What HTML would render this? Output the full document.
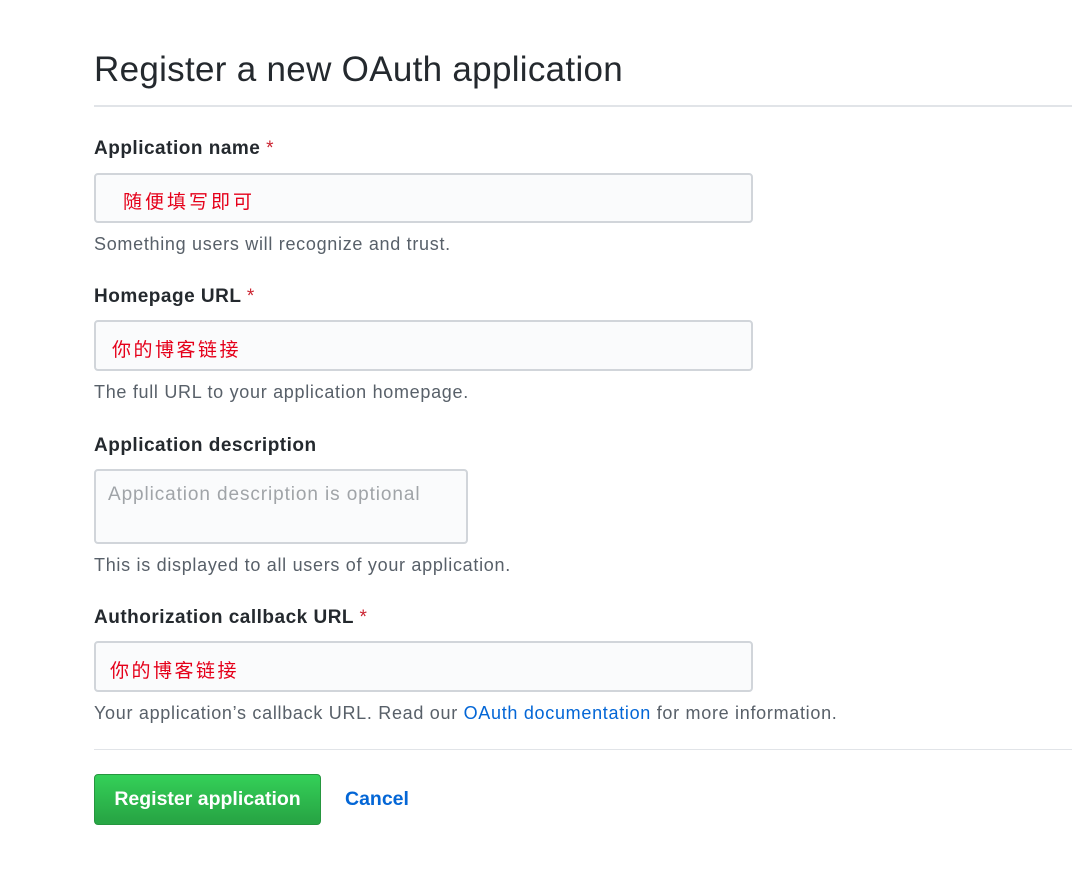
<!DOCTYPE html>
<html><head><meta charset="utf-8"><style>
body{margin:0;background:#fff;font-family:"Liberation Sans","Noto Sans CJK SC",sans-serif;color:#24292e;}
.abs{position:absolute;}
h1{position:absolute;left:94px;top:48px;margin:0;font-weight:400;font-size:35px;line-height:44px;letter-spacing:0.3px;color:#24292e;}
.hr{position:absolute;left:94px;right:0;height:2px;background:#e1e4e8;}
.lbl{position:absolute;left:94px;font-size:19px;font-weight:bold;line-height:24px;color:#24292e;letter-spacing:0.5px;}
.lbl span{color:#cb2431;font-weight:normal;}
.inp{position:absolute;left:94px;width:655px;height:47px;border:2px solid #d1d5da;border-radius:4px;background:#fafbfc;box-sizing:border-box;}
.cn{position:absolute;color:#e5001a;font-size:19px;font-family:"Noto Sans CJK SC",sans-serif;line-height:24px;letter-spacing:2.5px;}
.help{position:absolute;left:94px;font-size:18px;color:#586069;line-height:22px;letter-spacing:0.7px;}
a{color:#0366d6;text-decoration:none;}
</style></head><body>
<h1>Register a new OAuth application</h1>
<div class="hr" style="top:105px"></div>

<div class="lbl" style="top:137px">Application name <span>*</span></div>
<div class="inp" style="top:173px;height:50px;width:659px"></div>
<div class="cn" style="left:123px;top:189px;letter-spacing:3px">随便填写即可</div>
<div class="help" style="top:233px">Something users will recognize and trust.</div>

<div class="lbl" style="top:285px">Homepage URL <span>*</span></div>
<div class="inp" style="top:320px;height:51px;width:659px"></div>
<div class="cn" style="left:112px;top:337px">你的博客链接</div>
<div class="help" style="top:381px">The full URL to your application homepage.</div>

<div class="lbl" style="top:434px">Application description</div>
<div class="inp" style="top:469px;height:75px;width:374px"></div>
<div class="abs" style="left:108px;top:484px;font-size:19px;color:#a0a4a8;letter-spacing:0.9px">Application description is optional</div>
<div class="help" style="top:554px">This is displayed to all users of your application.</div>

<div class="lbl" style="top:606px">Authorization callback URL <span>*</span></div>
<div class="inp" style="top:641px;height:51px;width:659px"></div>
<div class="cn" style="left:110px;top:658px">你的博客链接</div>
<div class="help" style="top:702px">Your application’s callback URL. Read our <a>OAuth documentation</a> for more information.</div>

<div class="hr" style="top:749px;height:1px"></div>
<div class="abs" style="left:94px;top:774px;width:227px;height:51px;box-sizing:border-box;border:1px solid #26963f;border-radius:4px;background:linear-gradient(#34d058,#28a745 90%);color:#fff;font-weight:bold;font-size:19.5px;line-height:49px;text-align:center;">Register application</div>
<div class="abs" style="left:345px;top:788px;font-size:19.5px;font-weight:bold;color:#0366d6;">Cancel</div>
</body></html>
